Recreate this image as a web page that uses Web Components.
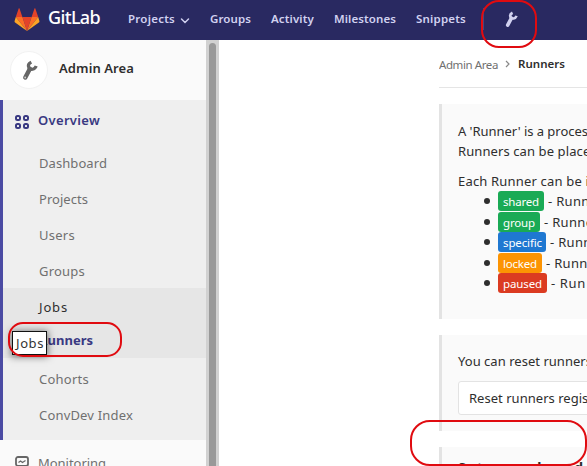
<!DOCTYPE html>
<html lang="en"><head><meta charset="utf-8"><title>Runners · Admin Area · GitLab</title>
<style>
html,body{margin:0;height:100%;overflow:hidden;background:#fff}
body{font:13px/20px "Noto Sans","Open Sans",sans-serif;color:#2e2e2e}
</style></head><body>
<admin-page></admin-page>
<script>
const define=(name,html,setup)=>customElements.define(name,class extends HTMLElement{
  connectedCallback(){
    if(this.shadowRoot)return;
    this.attachShadow({mode:'open'}).innerHTML=html;
    if(setup)setup(this,this.shadowRoot);
  }
});

/* Single-line label; "w" is the advance width that letter spacing is tuned to. */
define('ui-text','<style>:host{display:inline-block;white-space:nowrap}</style><span><slot></slot></span>',(el,root)=>{
  const w=+el.getAttribute('w'),n=el.textContent.length;
  if(!w)return;
  const span=root.querySelector('span');
  const d=(w-span.getBoundingClientRect().width)/n;
  span.style.letterSpacing=d.toFixed(3)+'px';
});

define('wrench-icon','<style>:host{display:block;width:16px;height:20px}svg{display:block;width:100%;height:100%}</style><svg viewBox="0 0 16 20"><path fill="none" stroke="currentColor" stroke-width="3.200" d="M9.300 1.700C6.400 3.200 5.900 5.300 6.900 7.300 8.500 9.700 12.800 9.300 14.200 5.500"/><path fill="none" stroke="currentColor" stroke-width="4.400" stroke-linecap="round" d="M7.900 8.300 3.300 17"/><circle cx="3.200" cy="17" r=".9" fill="var(--hole,transparent)"/></svg>');

define('top-bar',`<style>
:host{display:flex;height:40px;background:#292961;color:#d1d1f0;font-weight:600;font-size:11.5px;line-height:38px;overflow:hidden}
.logo{width:26px;height:24px;margin:8px 8px 0 14px;flex:none}
.brand{font-size:18px;font-weight:500;color:#fff;line-height:34px;width:79px;flex:none}
.chev{width:10px;height:7px;margin:17px 21px 0 5px;flex:none}
nav{display:flex;flex:none}nav ui-text{margin-right:20px}
i{width:1px;height:22px;margin:8px 0 0 -3px;background:#47477c;flex:none}
wrench-icon{width:13px;height:17px;margin:11px 0 0 21px;flex:none;color:#d1d1f0}
</style>
<svg class="logo" viewBox="0 0 26 24"><path fill="#e24329" d="M13 23 8.4 9h9.2z"/><path fill="#fc6d26" d="M13 23 8.4 9H1.8zM13 23l4.600-14h6.600z"/><path fill="#fca326" d="M1.800 9 .6 13c-.2.700 0 1.200.5 1.600L13 23zM24.200 9l1.200 4c.2.700 0 1.200-.5 1.600L13 23z"/><path fill="#e24329" d="M1.800 9h6.600L5.600.8c-.2-.6-.8-.6-1 0zM24.200 9h-6.600L20.400.8c.2-.6.8-.6 1 0z"/></svg>
<div class="brand"><ui-text w="52">GitLab</ui-text></div>
<nav><ui-text w="47" style="margin:0;margin-left:1px">Projects</ui-text><svg class="chev" viewBox="0 0 10 7"><path fill="none" stroke="#d1d1f0" stroke-width="1.500" stroke-linecap="round" d="m1.500 2 3.500 3.500L8.500 2"/></svg>
<ui-text w="41" style="margin-left:-1px">Groups</ui-text><ui-text w="43">Activity</ui-text><ui-text w="62">Milestones</ui-text><ui-text w="50">Snippets</ui-text></nav><i></i><wrench-icon></wrench-icon>`);

define('side-item',`<style>
:host{display:flex;align-items:center;height:36px;padding-left:36px;color:#707070}
:host([hover]){color:#2e2e2e;background:#e6e6e6}
:host([active]){height:30px;padding-bottom:3px;color:#393982;background:#e6e6e6;font-weight:700}
</style><slot></slot>`);

define('side-bar',`<style>
:host{display:block;width:206px;flex:none;background:#fafafa;height:426px;overflow:hidden}
header{display:flex;height:60px;align-items:center;font-weight:600;color:#2e2e2e}
.avatar{box-sizing:border-box;width:38px;height:38px;margin:0 11px 0 10px;border-radius:50%;background:#fff;border:1px solid #f2f2f2;padding:8px 11px;color:#666;--hole:#ccc}
.avatar wrench-icon{width:16px;height:21px}
header ui-text{margin-bottom:4px}
section{border-left:3px solid #4b4ba3;background:#efefef;height:340px;box-sizing:border-box}
h2{display:flex;align-items:center;margin:0;height:45px;padding:0 0 0 12px;font-size:13px;color:#393982;font-weight:600}
h2 svg{width:14px;height:14px;margin:0 9px 2px 0}
h2 ui-text{margin-bottom:6px}
footer{display:flex;align-items:center;height:46px;padding-left:15px;color:#707070}
footer svg{width:14px;height:14px;margin-right:9px}
</style>
<header><div class="avatar"><wrench-icon></wrench-icon></div><ui-text w="75">Admin Area</ui-text></header>
<section><h2><svg viewBox="0 0 14 14" fill="none" stroke="#393982" stroke-width="2"><rect x="1" y="1" width="4" height="4" rx="1.500"/><rect x="9" y="1" width="4" height="4" rx="1.500"/><rect x="1" y="9" width="4" height="4" rx="1.500"/><rect x="9" y="9" width="4" height="4" rx="1.500"/></svg><ui-text w="62">Overview</ui-text></h2>
<side-item><ui-text w="68">Dashboard</ui-text></side-item>
<side-item><ui-text w="49">Projects</ui-text></side-item>
<side-item><ui-text w="36">Users</ui-text></side-item>
<side-item><ui-text w="46">Groups</ui-text></side-item>
<side-item hover style="margin-top:-1px;height:37px"><ui-text w="29">Jobs</ui-text></side-item>
<side-item active><ui-text w="54">Runners</ui-text></side-item>
<side-item style="margin-top:3px"><ui-text w="50">Cohorts</ui-text></side-item>
<side-item><ui-text w="94">ConvDev Index</ui-text></side-item></section>
<footer><svg viewBox="0 0 14 14" fill="none" stroke="#666"><rect x="1" y="1" width="12" height="9" rx="2" stroke-width="1.800"/><path d="m3.500 6.500 2-1.500 2 1.500 3-2M3 12.500h8" stroke-width="1.200"/></svg><ui-text w="68">Monitoring</ui-text></footer>`);

define('scroll-track','<style>:host{display:block;width:13px;height:426px;background:#d1d1d1;flex:none;box-sizing:border-box;padding:3px 3px 0;overflow:hidden}div{height:440px;width:7px;border-radius:4px;background:#999}</style><div></div>');

define('info-panel','<style>:host{display:block;box-sizing:border-box;border-left:3px solid #e3e3e3;background:#fafafa;padding:17px 0 0 16px;margin-bottom:16px;white-space:nowrap}</style><slot></slot>');

define('runner-kind',`<style>
:host{display:flex;height:20.500px;align-items:center;padding-left:26px}
i{width:6px;height:6px;border-radius:50%;background:#2e2e2e;margin-right:8px;flex:none}
b{display:block;flex:none;box-sizing:border-box;height:20px;line-height:21px;padding-left:5px;border-radius:3px;color:#fff;font-weight:400;font-size:11.500px;margin-right:4px}
</style><i></i><b><slot name="tag"></slot></b><slot></slot>`,(el,root)=>{
  const b=root.querySelector('b');b.style.background=el.getAttribute('tone');b.style.width=el.getAttribute('tag-width')+'px';
});

define('runner-content',`<style>
:host{display:block;width:148px;flex:none;margin-left:220px;overflow:hidden;height:426px}
.crumb{display:flex;height:47px;border-bottom:1px solid #e5e5e5;margin-bottom:16px;line-height:50px;font-size:11.500px;color:#707070}
.crumb svg{width:5px;height:8px;margin:20px 8px 0 7px}
.crumb b{font-weight:600;color:#2e2e2e;line-height:47px}
p{margin:0;height:20px;line-height:20px}
.btn{box-sizing:border-box;width:200px;height:34px;margin-top:10px;border:1px solid #e3e3e3;border-radius:3px;background:#fff;padding-left:10px;line-height:33px}
h4{margin:0;font-size:14px;font-weight:700;line-height:20px}
</style>
<div class="crumb"><ui-text w="59">Admin Area</ui-text><svg viewBox="0 0 5 8"><path d="m1 1 3 3-3 3" fill="none" stroke="#888" stroke-width="1.200"/></svg><b><ui-text w="47">Runners</ui-text></b></div>
<info-panel style="height:215px"><p><ui-text w="239">A 'Runner' is a process which runs a job</ui-text></p><p style="margin-bottom:10px"><ui-text w="160">Runners can be placed on</ui-text></p><p><ui-text w="207">Each Runner can be in one of the</ui-text></p>
<runner-kind tone="#1aaa55" tag-width="46"><ui-text w="36" slot="tag">shared</ui-text><ui-text w="55">- Runner</ui-text></runner-kind>
<runner-kind tone="#1aaa55" tag-width="42"><ui-text w="32" slot="tag">group</ui-text><ui-text w="55">- Runner</ui-text></runner-kind>
<runner-kind tone="#1f78d1" tag-width="48"><ui-text w="39" slot="tag">specific</ui-text><ui-text w="55">- Runner</ui-text></runner-kind>
<runner-kind tone="#fc9403" tag-width="44"><ui-text w="34" slot="tag">locked</ui-text><ui-text w="55">- Runner</ui-text></runner-kind>
<runner-kind tone="#db3b21" tag-width="49"><ui-text w="39" slot="tag">paused</ui-text><ui-text w="35">- Run</ui-text></runner-kind>
</info-panel>
<info-panel style="height:96px;padding-top:16px"><p><ui-text w="134">You can reset runners</ui-text></p><div class="btn"><ui-text w="199">Reset runners registration token</ui-text></div></info-panel>
<info-panel style="height:100px;padding-top:11px"><h4><ui-text w="190">Set up a shared Runner</ui-text></h4></info-panel>`);

define('red-ring','<style>:host{display:block;position:absolute;box-sizing:border-box;border:2px solid #e00b10}</style>');
define('hover-tip','<style>:host{display:block;position:absolute;box-sizing:border-box;left:12px;top:331px;width:35px;height:24px;border:1px solid #111;background:#fff;color:#333;line-height:22px;padding-left:3px;box-shadow:0 1px 7px 1px rgba(0,0,0,.5)}</style><slot></slot>');

define('admin-page',`<style>:host{display:block;position:relative;width:587px;height:466px;overflow:hidden}main{display:flex}</style>
<top-bar></top-bar><main><side-bar></side-bar><scroll-track></scroll-track><runner-content></runner-content></main>
<hover-tip><ui-text w="28">Jobs</ui-text></hover-tip>
<red-ring style="left:481px;top:0;width:56px;height:48px;border-radius:18px"></red-ring>
<red-ring style="left:8px;top:322px;width:114px;height:35px;border-radius:15px"></red-ring>
<red-ring style="left:410px;top:420px;width:177px;height:46px;border-radius:20px"></red-ring>`);
</script></body></html>
